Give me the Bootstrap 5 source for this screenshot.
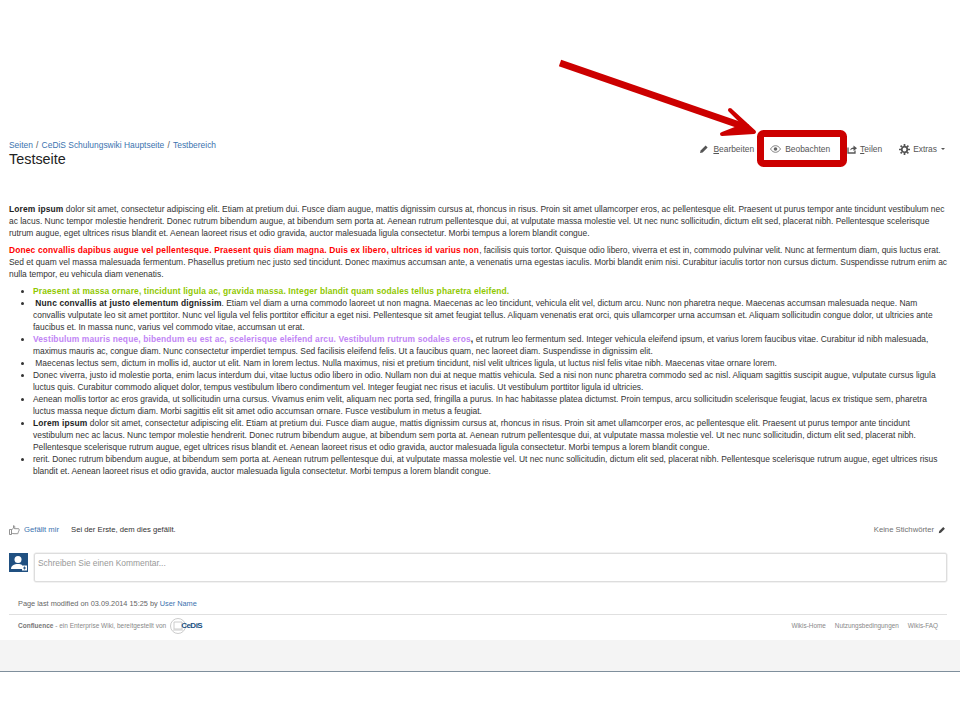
<!DOCTYPE html>
<html lang="de">
<head>
<meta charset="utf-8">
<title>Testseite</title>
<link href="https://cdn.jsdelivr.net/npm/bootstrap@5.3.0/dist/css/bootstrap.min.css" rel="stylesheet">
<style>
html,body{height:720px;overflow:hidden;background:#fff}
body{font-family:"Liberation Sans",Arial,sans-serif;font-size:8.44px;line-height:12px;color:#333;position:relative}
a{color:#3b73af;text-decoration:none}
.wiki-top{padding:139px 15px 0 9px;height:203px}
.crumbs{line-height:12px;color:#555}
.crumbs span{margin:0 3.2px}
.wiki-title{font-size:14.4px;line-height:16px;font-weight:400;color:#222;margin:0}
.wiki-actions{gap:15px;padding-top:4px;color:#555}
.wiki-actions svg{display:block}
.wiki-act{display:flex;align-items:center;gap:4px}
.wiki-act u{text-underline-offset:1px}
.act-watch{margin-left:1px;margin-right:2px}
.act-share{gap:3px}
.act-more{gap:3px;margin-left:2px}
.caret-mini{width:0;height:0;border:2px solid transparent;border-top:2.500px solid #555;border-bottom:0;margin-left:1px}
.wiki-body{padding:0 13px 0 9px;height:316px}
.wiki-body p{margin:0 -5px 5px 0}
.wiki-body strong{color:#222;letter-spacing:.14px}
.wiki-body ul{margin:0;padding-left:24px}
.c-red{color:#f00!important}.c-green{color:#8fc800!important}.c-violet{color:#c184f5!important}
.like-row{padding:0 13px 0 9px;height:20px;font-size:7.7px;margin-top:1px}
.like-row svg{display:block}
.like-note{margin-left:12px}
.tag-note{color:#707070;margin-right:1px}
.comment-row{padding:0 13px 0 9px;gap:6px;margin-top:13px}
.avatar{width:19px;height:19px;background:#205081;flex:none}
.comment-box{flex:1;height:29px;border:1px solid #ddd;border-radius:2px;padding:3px;color:#999;box-shadow:0 0 0 .5px #e6e6e6}
.mod-line{padding:16px 0 0 18px;font-size:7.35px;color:#666;height:32px}
.foot-row{margin:0 13px 0 9px;border-top:1px solid #e0e0e0;padding:2px 9px 5px 9px;height:26px;font-size:6.5px;color:#888}
.foot-row b{font-weight:700;color:#777}
.foot-links{gap:9px;color:#888;font-size:6.4px}
.cedis{font-size:8px;font-weight:700;color:#205081;letter-spacing:-.5px;margin-left:-5px}
.cedis-logo{margin-left:4px}
.grey-band{height:32px;background:#f4f4f4;border-bottom:1px solid #7f8f9c}
.callout{position:absolute;left:0;top:0;pointer-events:none}
</style>
</head>
<body>
<div class="wiki-top d-flex justify-content-between align-items-start">
  <div>
    <div class="crumbs"><a href="#">Seiten</a><span>/</span><a href="#">CeDiS Schulungswiki Hauptseite</a><span>/</span><a href="#">Testbereich</a></div>
    <h1 class="wiki-title">Testseite</h1>
  </div>
  <div class="wiki-actions d-flex align-items-center">
    <div class="wiki-act"><svg width="10" height="10" viewBox="0 0 10 10"><path d="M1 9l.6-2.600L6.600 1.400l2 2-5 5z" fill="#555"/></svg><span><u>B</u>earbeiten</span></div>
    <div class="wiki-act act-watch"><svg width="11" height="8" viewBox="0 0 11 8"><path d="M.5 4C2 1.600 3.700.7 5.500.7S9 1.600 10.500 4C9 6.400 7.300 7.300 5.500 7.300S2 6.400.5 4z" fill="none" stroke="#666" stroke-width=".8"/><circle cx="5.500" cy="4" r="1.800" fill="#666"/></svg><span>Beobachten</span></div>
    <div class="wiki-act act-share"><svg width="10" height="10" viewBox="0 0 10 10"><path d="M1 3.500v5.500h7V6.500" fill="none" stroke="#555" stroke-width="1.300"/><path d="M3 6.500C3.300 4.300 4.800 3.400 6.500 3.400V1.500L10 4.200 6.500 6.900V5C5 5 4 5.500 3 6.500z" fill="#555"/></svg><span><u>T</u>eilen</span></div>
    <div class="wiki-act act-more"><svg width="11" height="11" viewBox="0 0 11 11"><circle cx="5.500" cy="5.500" r="2.800" fill="none" stroke="#555" stroke-width="1.800"/><g stroke="#555" stroke-width="1.700"><path d="M5.500 0v2M5.500 9v2M0 5.500h2M9 5.500h2M1.600 1.600L3 3M8 8l1.400 1.400M1.600 9.400L3 8M8 3l1.400-1.400"/></g></svg><span>Extras</span><span class="caret-mini"></span></div>
  </div>
</div>
<div class="wiki-body">
  <p><strong>Lorem ipsum</strong> dolor sit amet, consectetur adipiscing elit. Etiam at pretium dui. Fusce diam augue, mattis dignissim cursus at, rhoncus in risus. Proin sit amet ullamcorper eros, ac pellentesque elit. Praesent ut purus tempor ante tincidunt vestibulum nec ac lacus. Nunc tempor molestie hendrerit. Donec rutrum bibendum augue, at bibendum sem porta at. Aenean rutrum pellentesque dui, at vulputate massa molestie vel. Ut nec nunc sollicitudin, dictum elit sed, placerat nibh. Pellentesque scelerisque rutrum augue, eget ultrices risus blandit et. Aenean laoreet risus et odio gravida, auctor malesuada ligula consectetur. Morbi tempus a lorem blandit congue.</p>
  <p><strong class="c-red">Donec convallis dapibus augue vel pellentesque. Praesent quis diam magna. Duis ex libero, ultrices id varius non</strong>, facilisis quis tortor. Quisque odio libero, viverra et est in, commodo pulvinar velit. Nunc at fermentum diam, quis luctus erat. Sed et quam vel massa malesuada fermentum. Phasellus pretium nec justo sed tincidunt. Donec maximus accumsan ante, a venenatis urna egestas iaculis. Morbi blandit enim nisi. Curabitur iaculis tortor non cursus dictum. Suspendisse rutrum enim ac nulla tempor, eu vehicula diam venenatis.</p>
  <ul>
    <li><strong class="c-green">Praesent at massa ornare, tincidunt ligula ac, gravida massa. Integer blandit quam sodales tellus pharetra eleifend.</strong></li>
    <li>&nbsp;<strong>Nunc convallis at justo elementum dignissim</strong>. Etiam vel diam a urna commodo laoreet ut non magna. Maecenas ac leo tincidunt, vehicula elit vel, dictum arcu. Nunc non pharetra neque. Maecenas accumsan malesuada neque. Nam convallis vulputate leo sit amet porttitor. Nunc vel ligula vel felis porttitor efficitur a eget nisi. Pellentesque sit amet feugiat tellus. Aliquam venenatis erat orci, quis ullamcorper urna accumsan et. Aliquam sollicitudin congue dolor, ut ultricies ante faucibus et. In massa nunc, varius vel commodo vitae, accumsan ut erat.</li>
    <li><strong class="c-violet">Vestibulum mauris neque, bibendum eu est ac, scelerisque eleifend arcu. Vestibulum rutrum sodales eros</strong><strong>,</strong> et rutrum leo fermentum sed. Integer vehicula eleifend ipsum, et varius lorem faucibus vitae. Curabitur id nibh malesuada, maximus mauris ac, congue diam. Nunc consectetur imperdiet tempus. Sed facilisis eleifend felis. Ut a faucibus quam, nec laoreet diam. Suspendisse in dignissim elit.</li>
    <li>&nbsp;Maecenas lectus sem, dictum in mollis id, auctor ut elit. Nam in lorem lectus. Nulla maximus, nisi et pretium tincidunt, nisl velit ultrices ligula, ut luctus nisl felis vitae nibh. Maecenas vitae ornare lorem.</li>
    <li>Donec viverra, justo id molestie porta, enim lacus interdum dui, vitae luctus odio libero in odio. Nullam non dui at neque mattis vehicula. Sed a nisi non nunc pharetra commodo sed ac nisl. Aliquam sagittis suscipit augue, vulputate cursus ligula luctus quis. Curabitur commodo aliquet dolor, tempus vestibulum libero condimentum vel. Integer feugiat nec risus et iaculis. Ut vestibulum porttitor ligula id ultricies.</li>
    <li>Aenean mollis tortor ac eros gravida, ut sollicitudin urna cursus. Vivamus enim velit, aliquam nec porta sed, fringilla a purus. In hac habitasse platea dictumst. Proin tempus, arcu sollicitudin scelerisque feugiat, lacus ex tristique sem, pharetra luctus massa neque dictum diam. Morbi sagittis elit sit amet odio accumsan ornare. Fusce vestibulum in metus a feugiat.</li>
    <li><strong>Lorem ipsum</strong> dolor sit amet, consectetur adipiscing elit. Etiam at pretium dui. Fusce diam augue, mattis dignissim cursus at, rhoncus in risus. Proin sit amet ullamcorper eros, ac pellentesque elit. Praesent ut purus tempor ante tincidunt vestibulum nec ac lacus. Nunc tempor molestie hendrerit. Donec rutrum bibendum augue, at bibendum sem porta at. Aenean rutrum pellentesque dui, at vulputate massa molestie vel. Ut nec nunc sollicitudin, dictum elit sed, placerat nibh. Pellentesque scelerisque rutrum augue, eget ultrices risus blandit et. Aenean laoreet risus et odio gravida, auctor malesuada ligula consectetur. Morbi tempus a lorem blandit congue.</li>
    <li>rerit. Donec rutrum bibendum augue, at bibendum sem porta at. Aenean rutrum pellentesque dui, at vulputate massa molestie vel. Ut nec nunc sollicitudin, dictum elit sed, placerat nibh. Pellentesque scelerisque rutrum augue, eget ultrices risus blandit et. Aenean laoreet risus et odio gravida, auctor malesuada ligula consectetur. Morbi tempus a lorem blandit congue.</li>
  </ul>
</div>
<div class="like-row d-flex justify-content-between align-items-center">
  <div class="d-flex align-items-center">
    <svg width="11" height="10" viewBox="0 0 11 10" class="me-1"><path d="M.5 4.500h2v5h-2zM2.500 5l2-2V.7c1.200-.2 1.500 1 1 3h4c.8 0 .8 1 .3 1.300.4.500.3 1-.2 1.300.2.500 0 1-.4 1.200.2.700-.2 1.200-.8 1.200H5c-1 0-1.600-.3-2.500-.7" fill="none" stroke="#777" stroke-width=".8"/></svg>
    <a href="#">Gefällt mir</a><span class="like-note">Sei der Erste, dem dies gefällt.</span>
  </div>
  <div class="d-flex align-items-center tag-note">Keine Stichwörter<svg width="8" height="8" viewBox="0 0 10 10" class="ms-1"><path d="M1 9l.6-2.600L6.600 1.400l2 2-5 5z" fill="#444"/></svg></div>
</div>
<div class="comment-row d-flex align-items-start">
  <div class="avatar"><svg width="19" height="19" viewBox="0 0 19 19"><circle cx="9" cy="6.500" r="3.500" fill="#fff"/><path d="M2 16c0-3.500 3-5 7-5 2 0 3 .4 4 1v4z" fill="#fff"/><rect x="13" y="12.500" width="5" height="5" fill="#fff"/><path d="M15.500 13.500v3M14 15h3" stroke="#205081" stroke-width=".9"/></svg></div>
  <div class="comment-box">Schreiben Sie einen Kommentar...</div>
</div>
<div class="mod-line">Page last modified on 03.09.2014 15:25 by <a href="#">User Name</a></div>
<div class="foot-row d-flex justify-content-between align-items-center">
  <div class="d-flex align-items-center"><span><b>Confluence</b> - ein Enterprise Wiki, bereitgestellt von</span>
    <span class="cedis-logo d-flex align-items-center"><svg width="16" height="16" viewBox="0 0 16 16"><circle cx="8" cy="8" r="7.500" fill="#fff" stroke="#ccc"/><path d="M4 4h8v7H4zM3 12h10" fill="none" stroke="#ccc"/></svg><span class="cedis">CeDiS</span></span></div>
  <div class="foot-links d-flex"><span>Wikis-Home</span><span>Nutzungsbedingungen</span><span>Wikis-FAQ</span></div>
</div>
<div class="grey-band"></div>
<svg class="callout" width="960" height="720" viewBox="0 0 960 720">
  <path d="M560 63L748 128" stroke="#cc0000" stroke-width="7" fill="none"/>
  <path d="M730 110L754 132L722 134L745 125z" stroke="#cc0000" stroke-width="4" fill="#cc0000" stroke-linejoin="round"/>
  <rect x="760.500" y="133.500" width="83" height="30" rx="3" fill="none" stroke="#cc0000" stroke-width="7"/>
</svg>
<script src="https://cdn.jsdelivr.net/npm/bootstrap@5.3.0/dist/js/bootstrap.bundle.min.js"></script>
</body>
</html>
